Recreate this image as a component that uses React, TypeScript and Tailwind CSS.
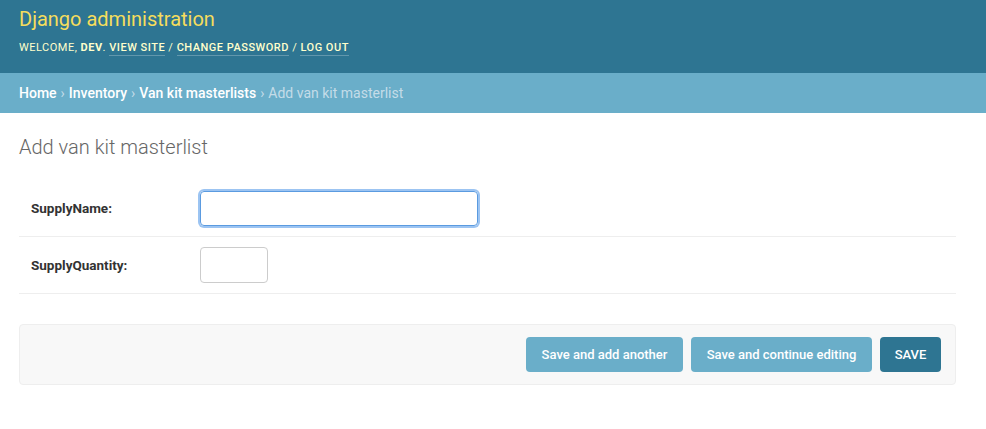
export default function App() {
  return (
    <div className="min-h-[429px] bg-white font-['Roboto',sans-serif] text-[13px] text-[#333]">
      <div className="h-[73px] bg-[#2e7592] px-[19px] pt-[7px]">
        <div className="text-[20px] leading-[24px] font-normal text-[#f5dd5d]">Django administration</div>
        <div className="mt-[10px] text-[11px] leading-[14px] tracking-[0.5px] uppercase text-[#ffc]">
          Welcome, <strong className="font-bold">dev</strong>.{" "}
          <a className="border-b border-white/25 pb-[1px] font-medium">View site</a> /{" "}
          <a className="border-b border-white/25 pb-[1px] font-medium">Change password</a> /{" "}
          <a className="border-b border-white/25 pb-[1px] font-medium">Log out</a>
        </div>
      </div>
      <div className="flex h-[40px] items-center bg-[#6aaec9] px-[19px] text-[14px] text-[#c4dce8]">
        <a className="font-medium text-white">Home</a>
        <span className="mx-[4px]">›</span>
        <a className="font-medium text-white">Inventory</a>
        <span className="mx-[4px]">›</span>
        <a className="font-medium text-white">Van kit masterlists</a>
        <span className="mx-[4px]">›</span>
        <span>Add van kit masterlist</span>
      </div>
      <div className="px-[19px] pt-[22px] pr-[30px]">
        <h1 className="mb-[22px] text-[20px] leading-[24px] font-light text-[#666]">Add van kit masterlist</h1>
        <div>
          <div className="flex items-center border-b border-[#eee] py-[10px] pl-3">
            <label className="w-[169px] text-[13.5px] font-bold">SupplyName:</label>
            <input
              type="text"
              className="h-[35px] w-[278px] rounded-[4px] border border-[#5b9be0] px-[6px] shadow-[0_0_0_2px_#9cc4f2] outline-none"
            />
          </div>
          <div className="flex items-center border-b border-[#eee] py-[10px] pl-3">
            <label className="w-[169px] text-[13.5px] font-bold">SupplyQuantity:</label>
            <input
              type="text"
              className="h-[36px] w-[68px] rounded-[4px] border border-[#ccc] px-[6px] outline-none"
            />
          </div>
        </div>
        <div className="mt-[30px] flex h-[61px] items-center justify-end gap-2 rounded-[4px] border border-[#eee] bg-[#f8f8f8] pr-[14px]">
          <button className="h-[35px] w-[157px] rounded-[4px] bg-[#6aaec9] text-[13px] font-medium text-white">
            Save and add another
          </button>
          <button className="h-[35px] w-[181px] rounded-[4px] bg-[#6aaec9] text-[13px] font-medium text-white">
            Save and continue editing
          </button>
          <button className="h-[35px] w-[61px] rounded-[4px] bg-[#2e7592] text-[13px] font-medium uppercase text-white">
            Save
          </button>
        </div>
      </div>
    </div>
  );
}
